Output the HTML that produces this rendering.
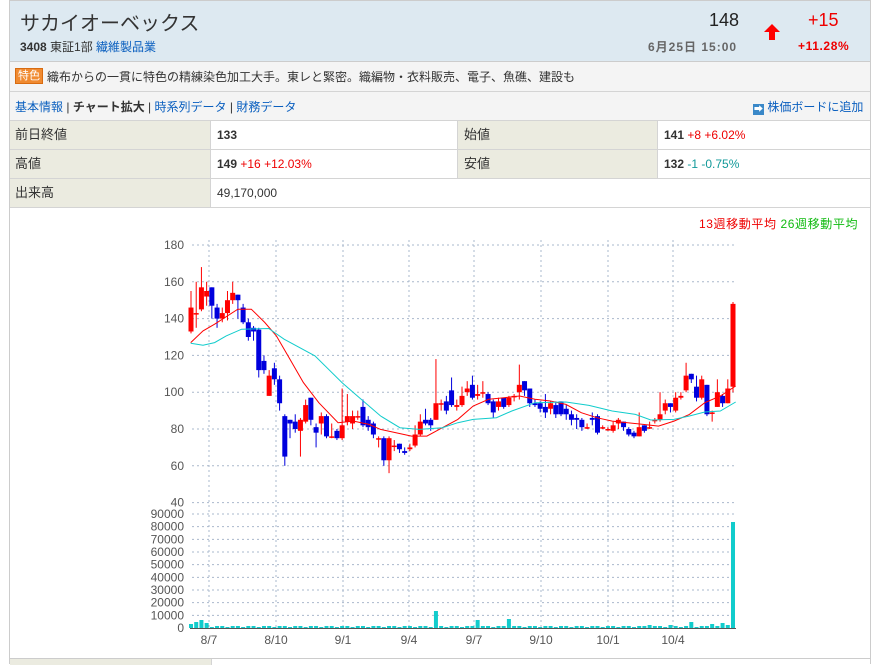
<!DOCTYPE html>
<html><head><meta charset="utf-8">
<style>
*{margin:0;padding:0;box-sizing:border-box}
body{width:878px;height:664px;background:#fff;font-family:"Liberation Sans","Noto Sans CJK JP",sans-serif;font-size:12px;color:#333;overflow:hidden;position:relative}
.wrap{position:absolute;left:9px;top:0;width:862px;height:664px;border-left:1px solid #ccc;border-right:1px solid #ccc}
.hdr{position:absolute;left:0;top:0;width:860px;height:62px;background:#dde9f1;border-top:1px solid #ccc;border-bottom:1px solid #ccc}
.abs{position:absolute;white-space:nowrap}
a{color:#0a5fbf;text-decoration:none}
.feat{position:absolute;left:0;top:62px;width:860px;height:30px;background:#f4f4f4;border-bottom:1px solid #d4d4d4}
.links{position:absolute;left:0;top:92px;width:860px;height:29px;background:#f4f4f4;border-bottom:1px solid #d4d4d4}
.row{position:absolute;left:0;width:860px;height:29px;border-bottom:1px solid #d4d4d4}
.lbl{position:absolute;top:0;height:28px;background:#ebebe0;line-height:28px;padding-left:5px;font-size:13px}
.val{position:absolute;top:0;height:28px;line-height:28px;font-size:12px;padding-left:6px}
.r{color:#e00}.g{color:#199}
</style></head><body>
<div class="wrap">
<div class="hdr">
 <div class="abs" style="left:10px;top:6px;font-size:20px;color:#333">サカイオーベックス</div>
 <div class="abs" style="left:10px;top:37px;font-size:12px"><b>3408</b> 東証1部 <a>繊維製品業</a></div>
 <div class="abs" style="left:699px;top:9px;font-size:18px;color:#222">148</div>
 <div class="abs" style="left:638px;top:37px;font-size:12px;font-weight:bold;color:#666;letter-spacing:1px">6月25日 15:00</div>
 <svg class="abs" style="left:752px;top:22px" width="20" height="18" viewBox="0 0 20 18"><path d="M10 1 L18 9 H13 V17 H7 V9 H2 Z" fill="#f00"/></svg>
 <div class="abs r" style="left:798px;top:9px;font-size:18px">+15</div>
 <div class="abs r" style="left:788px;top:38px;font-size:12px;font-weight:bold;letter-spacing:0.6px">+11.28%</div>
</div>
<div class="feat">
 <span class="abs" style="left:5px;top:6px;background:#f08a30;color:#fff;font-size:11px;padding:0 2px;line-height:14px;border:1px solid #d86b10">特色</span>
 <span class="abs" style="left:37px;top:6px;font-size:12px">織布からの一貫に特色の精練染色加工大手。東レと緊密。織編物・衣料販売、電子、魚礁、建設も</span>
</div>
<div class="links">
 <span class="abs" style="left:5px;top:6px;font-size:12px"><a>基本情報</a> | <b>チャート拡大</b> | <a>時系列データ</a> | <a>財務データ</a></span>
 <span class="abs" style="left:743px;top:6px;font-size:12px"><span style="display:inline-block;width:11px;height:11px;background:#3a88c8;color:#fff;font-size:9px;line-height:11px;text-align:center;vertical-align:-1px">➡</span> <a>株価ボードに追加</a></span>
</div>
<div class="row" style="top:121px">
 <div class="lbl" style="left:0;width:201px;border-right:1px solid #d4d4d4">前日終値</div>
 <div class="val" style="left:201px"><b>133</b></div>
 <div class="lbl" style="left:447px;width:201px;border-left:1px solid #d4d4d4;border-right:1px solid #d4d4d4;padding-left:6px">始値</div>
 <div class="val" style="left:648px"><b>141</b> <span class="r">+8 +6.02%</span></div>
</div>
<div class="row" style="top:150px">
 <div class="lbl" style="left:0;width:201px;border-right:1px solid #d4d4d4">高値</div>
 <div class="val" style="left:201px"><b>149</b> <span class="r">+16 +12.03%</span></div>
 <div class="lbl" style="left:447px;width:201px;border-left:1px solid #d4d4d4;border-right:1px solid #d4d4d4;padding-left:6px">安値</div>
 <div class="val" style="left:648px"><b>132</b> <span class="g">-1 -0.75%</span></div>
</div>
<div class="row" style="top:179px">
 <div class="lbl" style="left:0;width:201px;border-right:1px solid #d4d4d4">出来高</div>
 <div class="val" style="left:201px">49,170,000</div>
</div>
<div class="abs" style="left:689px;top:215px;font-size:12px;letter-spacing:0.6px"><span class="r">13週移動平均</span> <span style="color:#1b1">26週移動平均</span></div>
<div style="position:absolute;left:0;top:658px;width:860px;height:6px;border-top:1px solid #ccc"><div style="width:202px;height:6px;background:#ebebe0;border-right:1px solid #d4d4d4"></div></div>
</div>
<svg id="ch" style="position:absolute;left:0;top:0" width="878" height="664"></svg>
<script>
var s='';
function Y(p){return 245+(180-p)*1.84;}
var f='font-family="Liberation Sans,sans-serif" font-size="12" fill="#555"';
for(var p=40;p<=180;p+=20){var y=Y(p);s+='<line x1="192" x2="736" y1="'+y+'" y2="'+y+'" stroke="#aab8cc" stroke-dasharray="2,3"/>';s+='<text x="184" y="'+(y+4)+'" text-anchor="end" '+f+'>'+p+'</text>';}
function VY(v){return 628-v/90000*114;}
for(var v=0;v<=90000;v+=10000){var y=VY(v);if(v>0)s+='<line x1="192" x2="736" y1="'+y+'" y2="'+y+'" stroke="#aab8cc" stroke-dasharray="2,3"/>';s+='<text x="184" y="'+(y+4)+'" text-anchor="end" '+f+'>'+v+'</text>';}
var gx=[209,276,343,409,474,541,608,673],gl=['8/7','8/10','9/1','9/4','9/7','9/10','10/1','10/4'];
for(var i=0;i<8;i++){s+='<line x1="'+gx[i]+'" x2="'+gx[i]+'" y1="240" y2="628" stroke="#aab8cc" stroke-dasharray="2,3"/>';s+='<text x="'+gx[i]+'" y="644" text-anchor="middle" '+f+'>'+gl[i]+'</text>';}
s+='<line x1="190" x2="736" y1="628.5" y2="628.5" stroke="#555"/>';
var d=[[133,146,155,132],[143,143,160,135],[145,157,168,144],[152,155,160,147],[157,147,157,140],[146,140,148,135],[140,143,146,138],[143,150,155,139],[150,154,160,148],[153,150,153,140],[146,138,148,137],[138,130,140,128],[135,133,136,128],[134,112,135,108],[117,112,120,110],[98,109,112,98],[113,107,116,104],[107,94,109,90],[87,65,88,60],[85,83,85,75],[84,80,88,78],[79,85,86,65],[84,93,96,83],[97,85,97,82],[81,78,83,70],[83,87,89,77],[87,76,88,75],[76,76,83,75],[79,75,80,74],[75,82,102,74],[84,87,99,82],[83,87,90,80],[87,87,90,85],[92,82,96,81],[85,81,87,79],[83,77,84,75],[75,75,76,70],[75,63,76,60],[63,75,76,56],[71,71,74,68],[72,69,72,67],[68,67,70,66],[69,70,72,68],[71,77,82,70],[77,84,88,76],[85,83,91,82],[85,82,86,79],[85,94,118,85],[94,94,96,90],[95,90,98,88],[101,93,108,92],[92,93,96,90],[93,98,103,92],[100,102,106,98],[104,97,109,96],[98,99,104,96],[100,100,106,97],[99,94,100,93],[95,89,96,86],[92,95,97,90],[97,92,97,91],[93,97,98,92],[98,98,99,95],[100,104,115,96],[106,101,106,98],[102,94,102,92],[94,93,96,92],[94,91,95,89],[92,89,99,86],[91,94,95,88],[93,88,95,86],[95,88,95,87],[91,88,93,85],[88,85,90,82],[86,85,88,80],[85,81,86,79],[81,81,83,80],[86,85,89,82],[87,78,88,77],[81,81,82,80],[80,80,81,79],[79,82,84,78],[83,85,86,80],[84,81,84,79],[80,77,81,76],[78,76,79,75],[76,81,89,76],[82,79,82,78],[81,81,84,80],[85,85,86,83],[85,88,100,84],[90,94,96,88],[94,92,94,89],[90,97,100,89],[97,98,100,96],[101,109,116,100],[110,107,110,105],[103,97,109,95],[97,107,109,96],[104,88,104,87],[89,89,90,84],[92,100,107,92],[98,94,99,92],[94,102,107,94],[103,148,149,100]];
var n=d.length,dx=(733-191)/(n-1);
for(var i=0;i<n;i++){var o=d[i][0],c=d[i][1],h=d[i][2],l=d[i][3],x=191+i*dx,col=c>=o?'#f00':'#00d';
s+='<line x1="'+x+'" x2="'+x+'" y1="'+Y(h)+'" y2="'+Y(l)+'" stroke="'+col+'"/>';
var t=Y(Math.max(o,c)),b=Y(Math.min(o,c));if(b-t<1.5)b=t+1.5;
s+='<rect x="'+(x-2.5)+'" y="'+t+'" width="5" height="'+(b-t)+'" fill="'+col+'"/>';}
function pl(pts,col){var q=[];for(var i=0;i<pts.length;i+=2)q.push((149+pts[i]*0.386).toFixed(1)+','+(229+pts[i+1]*0.334).toFixed(1));return '<polyline fill="none" stroke="'+col+'" points="'+q.join(' ')+'"/>';}
s+=pl([108,340,140,305,170,285,230,240,265,240,300,280,330,320,360,380,400,460,440,520,490,580,530,575,570,585,600,600,640,610,680,620,720,620,760,595,800,570,840,530,880,510,920,505,960,500,1000,510,1040,515,1080,525,1120,550,1160,565,1200,575,1240,580,1280,585,1320,590,1360,575,1400,555,1440,520,1480,500,1520,470],'#f00');
s+=pl([108,342,140,348,170,340,200,320,240,300,310,298,350,330,430,380,500,460,540,500,600,560,650,595,700,600,760,595,800,580,840,570,900,565,940,545,1000,520,1080,518,1140,528,1200,545,1260,555,1300,572,1360,570,1400,560,1440,548,1480,545,1520,518],'#1cc');
var vv={0:4,1:6,2:8,3:5,47:17,55:8,88:3,92:3,96:6,100:4,102:5,103:3};
for(var i=0;i<n;i++){var h=vv[i]||(i%3==1?1:2);if(i==n-1)h=106;if(i==Math.round((511-191)/dx))h=9;var x=191+i*dx;
s+='<rect x="'+(x-2)+'" y="'+(628-h)+'" width="4" height="'+h+'" fill="#1cc"/>';}
document.getElementById('ch').innerHTML=s;
</script>
</body></html>
